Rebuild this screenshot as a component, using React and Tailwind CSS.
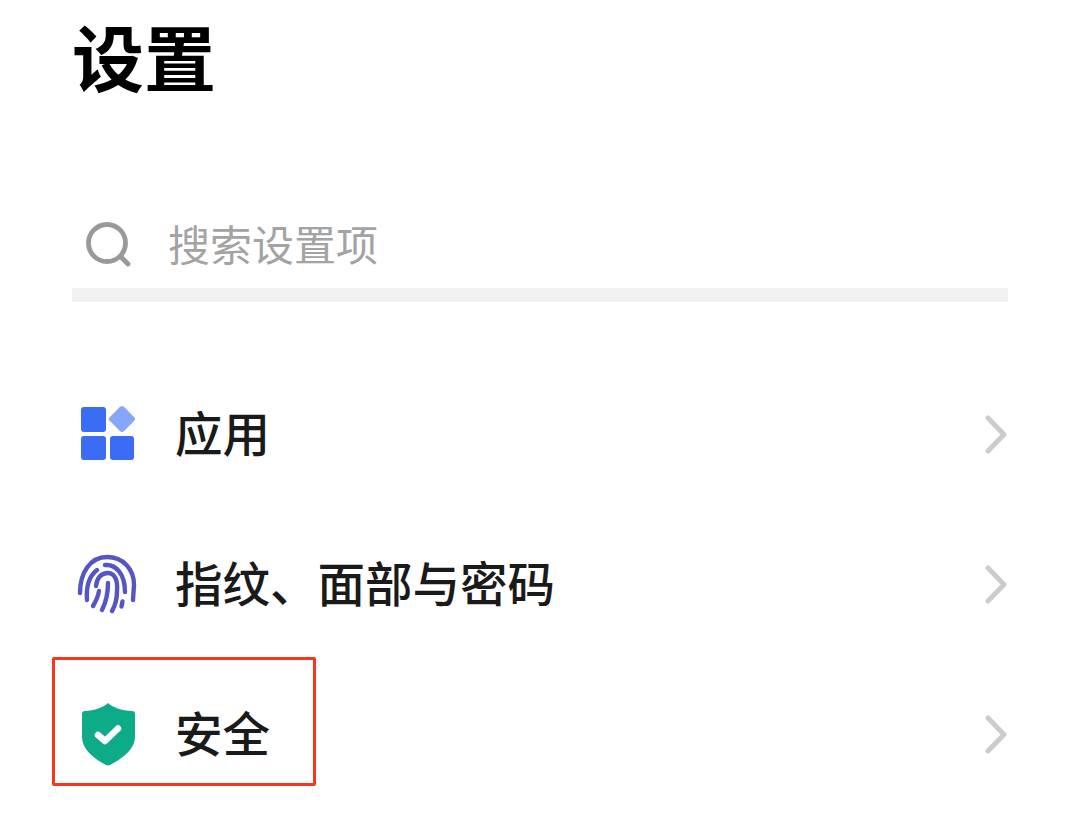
const font = { fontFamily: '"Noto Sans CJK SC", sans-serif' };

function AppIcon() {
  return (
    <svg width="72" height="72" viewBox="0 0 72 72" className="shrink-0">
      <rect x="9" y="8" width="25" height="25" rx="3" fill="#3a6cf4" />
      <rect x="9" y="37" width="25" height="24" rx="3" fill="#3a6cf4" />
      <rect x="38" y="37" width="24" height="24" rx="3" fill="#3a6cf4" />
      <rect x="40" y="10" width="20" height="20" rx="3" fill="#85a6fb" transform="rotate(45 50 20)" />
    </svg>
  );
}

function FingerIcon() {
  return (
    <svg width="72" height="72" viewBox="0 0 72 72" className="shrink-0" fill="none" stroke="#5555c6" strokeWidth="4.4" strokeLinecap="round">
      <path d="M8 44 C8 24 18 8 35 8 C51 8 62 20 62 36 L61 51" />
      <path d="M15 51 C14 38 16 28 25 21" />
      <path d="M33 16 C44 15 53 25 53 43" />
      <path d="M24 37 C25 28 30 24 36 24 C43 24 46 32 45 42 C45 50 43 57 40 62" />
      <path d="M30 61 C34 53 36 44 36 34" />
      <path d="M21 57 C24 52 26 48 27 42" />
      <path d="M50.500 52.500 L49.500 57.500" />
    </svg>
  );
}

function ShieldIcon() {
  return (
    <svg width="72" height="72" viewBox="0 0 72 72" className="shrink-0">
      <path d="M36 4 C40 8 50 12 60 12 C62 12 63 13 63 15 L63 38 C63 50 50 60 38 66 C37 66.500 35 66.500 34 66 C22 60 10 50 10 38 L10 15 C10 13 11 12 13 12 C22 12 32 8 36 4 Z" fill="#0dab88" />
      <path d="M26 36 L33 42 L46 29.500" fill="none" stroke="#ffffff" strokeWidth="6.500" strokeLinecap="round" strokeLinejoin="round" />
    </svg>
  );
}

function Chevron() {
  return (
    <svg width="24" height="40" viewBox="0 0 24 40" className="shrink-0" fill="none" stroke="#cccccc" strokeWidth="5" strokeLinecap="round" strokeLinejoin="round">
      <path d="M4 3 L20 19.500 L4 36" />
    </svg>
  );
}

function Row({ icon, label }) {
  return (
    <div className="flex h-[150px] items-center justify-between">
      <div className="flex items-center gap-[31px]">
        {icon}
        <span className="-translate-y-[3px] text-[47.5px] font-medium leading-none text-[#1a1a1a]">{label}</span>
      </div>
      <Chevron />
    </div>
  );
}

export default function App() {
  return (
    <div className="relative h-[828px] w-[1080px] overflow-hidden bg-white px-[72px]" style={font}>
      <h1 className="flex h-[110px] items-center text-[72px] font-bold leading-none text-black">设置</h1>
      <div className="mt-[106px] flex h-[58px] items-center gap-[26px] pl-[14px]">
        <svg width="56" height="56" viewBox="0 0 56 56" className="shrink-0" fill="none" stroke="#999999" strokeWidth="4.800" strokeLinecap="round">
          <circle cx="21" cy="26" r="18.500" />
          <path d="M35 40 L42 47" />
        </svg>
        <span className="-translate-y-[2px] text-[42px] leading-[58px] text-[#a3a3a3]">搜索设置项</span>
      </div>
      <div className="mt-[14px] h-[14px] bg-[#f2f2f2]" />
      <div className="mt-[58px] flex flex-col">
        <Row icon={<AppIcon />} label="应用" />
        <Row icon={<FingerIcon />} label="指纹、面部与密码" />
        <Row icon={<ShieldIcon />} label="安全" />
      </div>
      <div className="absolute left-[52px] top-[657px] h-[129px] w-[264px] rounded-[2px] border-[3px] border-[#f5381a]" />
    </div>
  );
}
